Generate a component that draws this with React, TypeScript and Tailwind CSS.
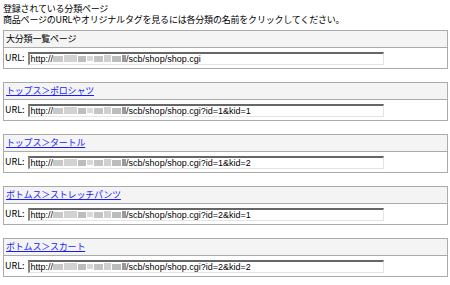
import React from "react";

type categoryType = {
  title: string;
  link: boolean;
  query: string;
};

const categories: categoryType[] = [
  { title: "大分類一覧ページ", link: false, query: "" },
  { title: "トップス＞ポロシャツ", link: true, query: "?id=1&kid=1" },
  { title: "トップス＞タートル", link: true, query: "?id=1&kid=2" },
  { title: "ボトムス＞ストレッチパンツ", link: true, query: "?id=2&kid=1" },
  { title: "ボトムス＞スカート", link: true, query: "?id=2&kid=2" },
];

function UrlField({ query }: { query: string }) {
  return (
    <div
      className="w-[356px] h-[13px] bg-white border-t-2 border-l-2 border-t-[#666666] border-l-[#888888] border-b border-r border-b-[#e4e4e4] border-r-[#e4e4e4] flex items-center overflow-hidden pl-[1px] text-[9px] leading-[10px] text-black whitespace-nowrap"
      style={{ fontFamily: '"Liberation Sans", Arial, sans-serif' }}
    >
      <span>http://</span>
      {/* blurred host name */}
      <span className="inline-flex items-center h-[8px] w-[73px] gap-[1px] blur-[0.6px]">
        <span className="h-[6px] w-[10px] bg-[#c8c8c8]" />
        <span className="h-[7px] w-[14px] bg-[#d2d2d2]" />
        <span className="h-[6px] w-[8px] bg-[#bdbdbd]" />
        <span className="h-[5px] w-[6px] bg-[#d8d8d8]" />
        <span className="h-[6px] w-[9px] bg-[#c4c4c4]" />
        <span className="h-[7px] w-[7px] bg-[#d0d0d0]" />
        <span className="h-[6px] w-[10px] bg-[#bcbcbc]" />
        <span className="h-[7px] w-[4px] bg-[#9a9a9a]" />
      </span>
      <span>/scb/shop/shop.cgi{query}</span>
    </div>
  );
}

export default function App() {
  return (
    <div
      className="w-[450px] h-[285px] bg-white pl-[3px] pt-[3px] text-black overflow-hidden"
      style={{ fontFamily: '"Noto Sans CJK JP", "Noto Sans", sans-serif' }}
    >
      {/* Intro */}
      <div className="text-[9px] leading-[11px] tracking-[-0.2px]">
        <div>登録されている分類ページ</div>
        <div>商品ページのURLやオリジナルタグを見るには各分類の名前をクリックしてください。</div>
      </div>

      {/* Category boxes */}
      <div className="mt-[5px] flex flex-col gap-[13px]">
        {categories.map((cat) => (
          <div key={cat.title} className="w-[445px] border border-[#ababab]">
            <div className="h-[17px] bg-[#f4f4f4] border-b border-[#ababab] flex items-center px-[2px] text-[9px] tracking-[-0.2px]">
              {cat.link ? (
                <a href="#" className="text-[#1a1aff] underline">
                  {cat.title}
                </a>
              ) : (
                <span>{cat.title}</span>
              )}
            </div>
            <div className="h-[20px] flex items-center pl-[1px] gap-[3px] text-[9px]">
              <span>URL:</span>
              <UrlField query={cat.query} />
            </div>
          </div>
        ))}
      </div>
    </div>
  );
}
